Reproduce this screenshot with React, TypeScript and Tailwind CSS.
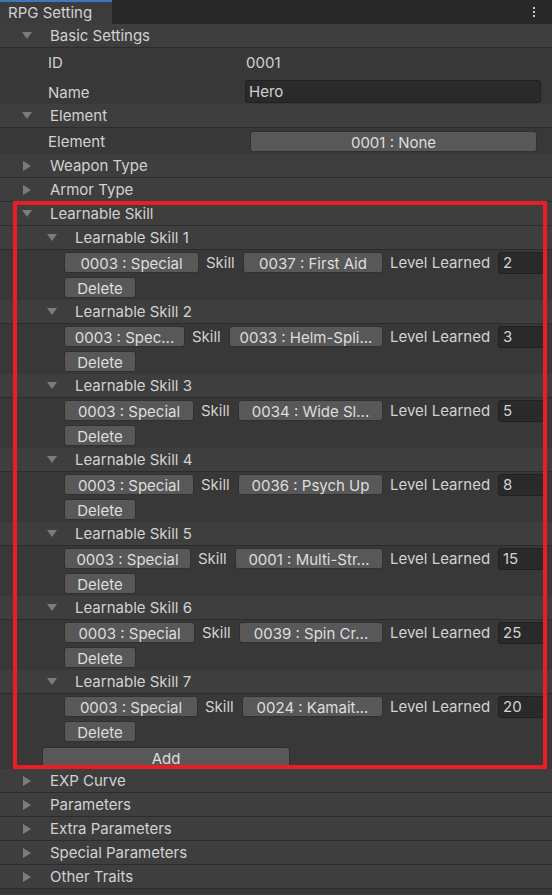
import React from 'react';

const font = { fontFamily: 'Inter, "Noto Sans", sans-serif' };

function Arrow({ open }: { open: boolean }) {
  return open ? (
    <svg width="10" height="7" viewBox="0 0 10 7" className="block">
      <path d="M0 0 H10 L5 7 Z" fill="#7c7c7c" />
    </svg>
  ) : (
    <svg width="8" height="10" viewBox="0 0 8 10" className="block">
      <path d="M0 0 L8 5 L0 10 Z" fill="#7c7c7c" />
    </svg>
  );
}

function Header({ label, open = false, nested = false }: { label: string; open?: boolean; nested?: boolean }) {
  return (
    <div className="flex h-[24px] items-center border-b border-[#2c2c2c] bg-[#3e3e3e] text-[15px] text-[#d2d2d2]">
      <div className={`flex w-[28px] shrink-0 items-center ${nested ? 'ml-[47px]' : 'ml-[22px]'} ${open ? '' : 'pl-[1px]'}`}>
        <Arrow open={open} />
      </div>
      <span className="whitespace-nowrap pt-[2px]">{label}</span>
    </div>
  );
}

function Btn({ children, className = '' }: { children: React.ReactNode; className?: string }) {
  return (
    <div
      className={`flex h-[21px] shrink-0 items-center justify-center whitespace-nowrap rounded-[3px] border border-[#303030] bg-[#585858] pt-[1px] text-[15px] leading-none text-[#dedede] ${className}`}
    >
      {children}
    </div>
  );
}

type Skill = { type: string; typeW: string; skill: string; skillW: string; level: string };

const skills: Skill[] = [
  { type: '0003 : Special', typeW: 'w-[135px]', skill: '0037 : First Aid', skillW: 'w-[140px]', level: '2' },
  { type: '0003 : Spec...', typeW: 'w-[121px]', skill: '0033 : Helm-Spli...', skillW: 'w-[154px]', level: '3' },
  { type: '0003 : Special', typeW: 'w-[130px]', skill: '0034 : Wide Sl...', skillW: 'w-[145px]', level: '5' },
  { type: '0003 : Special', typeW: 'w-[130px]', skill: '0036 : Psych Up', skillW: 'w-[145px]', level: '8' },
  { type: '0003 : Special', typeW: 'w-[127px]', skill: '0001 : Multi-Str...', skillW: 'w-[148px]', level: '15' },
  { type: '0003 : Special', typeW: 'w-[131px]', skill: '0039 : Spin Cr...', skillW: 'w-[144px]', level: '25' },
  { type: '0003 : Special', typeW: 'w-[134px]', skill: '0024 : Kamait...', skillW: 'w-[141px]', level: '20' },
];

export default function App() {
  return (
    <div className="relative min-h-screen w-[552px] overflow-hidden bg-[#383838]" style={font}>
      {/* Tab bar */}
      <div className="flex h-[24px] items-stretch bg-[#282828]">
        <div className="flex w-[112px] items-center border-t-2 border-[#3a79bb] bg-[#3c3c3c] pl-[8px] pt-[1px] text-[15px] text-[#d2d2d2]">
          RPG Setting
        </div>
        <div className="flex-1" />
        <div className="flex w-[36px] flex-col items-center justify-center gap-[2px] pr-[1px]">
          <div className="h-[2px] w-[2px] bg-[#c8c8c8]" />
          <div className="h-[2px] w-[2px] bg-[#c8c8c8]" />
          <div className="h-[2px] w-[2px] bg-[#c8c8c8]" />
        </div>
      </div>

      <Header label="Basic Settings" open />
      <div className="flex h-[30px] items-center pt-[1px] text-[15px] text-[#d2d2d2]">
        <span className="w-[246px] pl-[48px]">ID</span>
        <span>0001</span>
      </div>
      <div className="flex h-[26px] items-start text-[15px] text-[#d2d2d2]">
        <span className="mt-[4px] w-[245px] pl-[48px]">Name</span>
        <div className="mt-[2px] flex h-[23px] w-[296px] items-center rounded-[3px] border border-[#212121] bg-[#2a2a2a] pl-[3px] pt-[2px]">
          Hero
        </div>
      </div>

      <Header label="Element" open />
      <div className="flex h-[26px] items-start text-[15px] text-[#d2d2d2]">
        <span className="mt-[3px] w-[250px] pl-[48px]">Element</span>
        <Btn className="mt-[3px] w-[287px]">0001 : None</Btn>
      </div>

      <Header label="Weapon Type" />
      <Header label="Armor Type" />
      <Header label="Learnable Skill" open />

      {skills.map((s, i) => (
        <div key={i}>
          <Header label={`Learnable Skill ${i + 1}`} open nested />
          <div className="flex h-[25px] items-center pl-[64px] text-[15px] text-[#d2d2d2]">
            <Btn className={s.typeW}>{s.type}</Btn>
            <span className="w-[44px] shrink-0 pl-[7px] pt-[2px]">Skill</span>
            <Btn className={s.skillW}>{s.skill}</Btn>
            <span className="w-[115px] shrink-0 whitespace-nowrap pl-[7px] pt-[2px]">Level Learned</span>
            <div className="flex h-[22px] w-[46px] shrink-0 items-center rounded-[3px] border border-[#212121] bg-[#2a2a2a] pl-[4px] pt-[2px]">
              {s.level}
            </div>
          </div>
          <div className="flex h-[25px] items-center pl-[64px]">
            <Btn className="w-[72px]">Delete</Btn>
          </div>
        </div>
      ))}

      <div className="flex h-[25px] items-start pl-[42px]">
        <Btn className="mt-[3px] w-[248px]">Add</Btn>
      </div>

      <Header label="EXP Curve" />
      <Header label="Parameters" />
      <Header label="Extra Parameters" />
      <Header label="Special Parameters" />
      <Header label="Other Traits" />

      {/* Highlight frame drawn over the Learnable Skill section */}
      <div className="pointer-events-none absolute left-[13px] top-[201px] h-[568px] w-[534px] border-4 border-[#ec1c24]" />
    </div>
  );
}
